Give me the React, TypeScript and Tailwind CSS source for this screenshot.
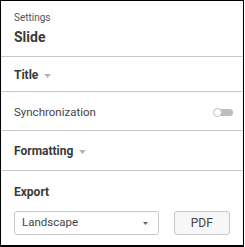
import React from "react";

function Caret({ className = "" }: { className?: string }) {
  return (
    <svg width="7" height="4" viewBox="0 0 7 4" className={className}>
      <path d="M0 0 L7 0 L3.5 4 Z" fill="#b5b5b5" />
    </svg>
  );
}

export default function App() {
  return (
    <div
      className="w-[244px] h-[247px] border border-black border-b-2 bg-white text-[#333] flex flex-col"
      style={{ fontFamily: "Roboto, 'Liberation Sans', sans-serif" }}
    >
      <div className="h-[56px] px-[13px] pt-[10px] border-b border-[#c8c8c8]">
        <div className="text-[10px] leading-[14px] text-[#555]">Settings</div>
        <div className="text-[14px] leading-[18px] font-bold mt-[3px] text-[#3a3a3a]">Slide</div>
      </div>
      <div className="h-[35px] px-[13px] flex items-center gap-[6px] border-b border-[#c8c8c8]">
        <span className="text-[12px] font-bold text-[#3a3a3a] mt-[2px]">Title</span>
        <Caret className="mt-[4px]" />
      </div>
      <div className="h-[39px] pl-[13px] pr-[10px] pt-[3px] flex items-center justify-between border-b border-[#c8c8c8]">
        <span className="text-[11.5px] text-[#444]">Synchronization</span>
        <div className="relative w-[19px] h-[7px] rounded-full bg-[#bdbdbd]">
          <div className="absolute left-[-1px] top-[-1px] w-[9px] h-[9px] rounded-full bg-white border border-[#bdbdbd]" />
        </div>
      </div>
      <div className="h-[40px] px-[13px] flex items-center gap-[6px] border-b border-[#c8c8c8]">
        <span className="text-[12px] font-bold text-[#3a3a3a]">Formatting</span>
        <Caret className="mt-[2px]" />
      </div>
      <div className="flex-1 px-[13px] pt-[13px]">
        <div className="text-[12px] font-bold text-[#3a3a3a] leading-[16px]">Export</div>
        <div className="flex items-center mt-[11px] gap-[15px]">
          <div className="w-[146px] h-[24px] border border-[#c8c8c8] rounded-[3px] flex items-center justify-between pl-[7px] pr-[10px]">
            <span className="text-[11.5px] text-[#444]">Landscape</span>
            <svg width="5" height="3" viewBox="0 0 5 3">
              <path d="M0 0 L5 0 L2.5 3 Z" fill="#666" />
            </svg>
          </div>
          <div className="w-[57px] h-[24px] border border-[#c8c8c8] rounded-[3px] bg-[#f7f7f7] flex items-center justify-center text-[12px] text-[#444]">
            PDF
          </div>
        </div>
      </div>
    </div>
  );
}
